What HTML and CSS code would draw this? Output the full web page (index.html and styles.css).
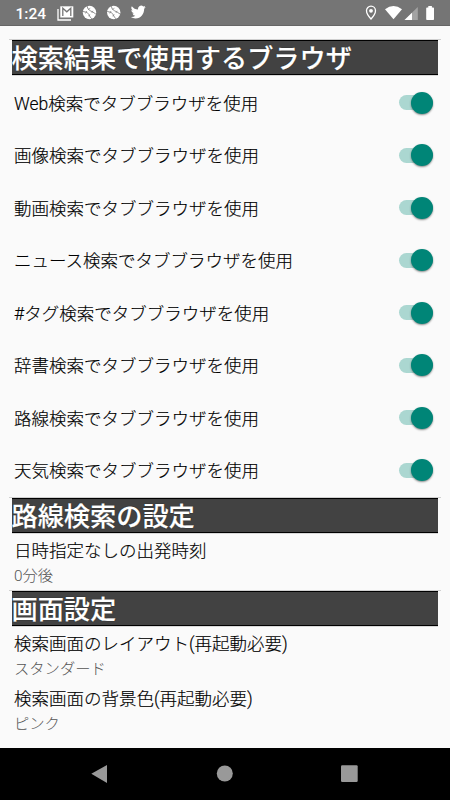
FILE: index.html
```html
<!DOCTYPE html>
<html lang="ja">
<head>
<meta charset="utf-8">
<title>設定</title>
<link rel="stylesheet" href="styles.css">
</head>
<body>
<header class="status">
  <span class="clock">1:24</span>
  <svg class="status-left" width="92" height="16" viewBox="0 0 92 16">
    <path d="M1 4v11h13" fill="none" stroke="#fff" stroke-width="1.3"/>
    <path d="M3.300 1.300h13v11.200h-13z" fill="#fff"/>
    <path d="M5.800 11V3.200l4 3.600 4-3.600V11" fill="none" stroke="#757575" stroke-width="1.3"/>
    <g id="ball">
      <circle cx="32.500" cy="7.500" r="6.700" fill="#fff"/>
      <path d="M26 6.500q5 .1 6 3.200t3.200 4.300M30 1q.4 3.500 3.200 4.700T38.800 9" fill="none" stroke="#757575" stroke-width=".8"/>
      <path d="M28.500 8.500l1.300-2.500M31.200 11l2-1.400M31 4.500l2.300-1.300M34.700 8l1.300-2.200" stroke="#757575" stroke-width=".6"/>
    </g>
    <use href="#ball" x="24.200"/>
    <path transform="translate(73.800 -.9) scale(.62 .66)" fill="#fff" d="M23.95 4.570a10 10 0 0 1-2.820.77 4.960 4.960 0 0 0 2.160-2.720c-.95.55-2 .95-3.130 1.180a4.920 4.920 0 0 0-8.380 4.480C7.690 8.100 4.070 6.130 1.640 3.160a4.920 4.920 0 0 0 1.520 6.570 4.900 4.900 0 0 1-2.230-.61v.06a4.920 4.920 0 0 0 3.950 4.830 5 5 0 0 1-2.210.08 4.940 4.940 0 0 0 4.600 3.420A9.870 9.870 0 0 1 0 19.540a14 14 0 0 0 7.550 2.210c9.050 0 14-7.500 14-13.980 0-.21 0-.42-.02-.63a9.900 9.900 0 0 0 2.420-2.570z"/>
  </svg>
  <svg class="status-right" width="72" height="16" viewBox="0 0 72 16">
    <path d="M6 1.200a4.500 4.500 0 0 0-4.500 4.500C1.500 9 6 14 6 14s4.500-5 4.500-8.300A4.500 4.500 0 0 0 6 1.200z" fill="none" stroke="#fff" stroke-width="1.3"/>
    <circle cx="6" cy="5.800" r="1.900" fill="#fff"/>
    <path d="M20 4.200Q28.500-2.200 37 4.200L28.500 14.200z" fill="#fff"/>
    <path d="M52.800 2v13H39.500z" fill="#a3a3a3"/>
    <path d="M47 7.700V15h-7.500z" fill="#fff"/>
    <path d="M63.300 1h3.600v1.400h1.300q.8 0 .8.800v11q0 .8-.8.800H62q-.8 0-.8-.8v-11q0-.8.8-.8h1.300z" fill="#fff"/>
  </svg>
</header>
<main class="settings">
  <h2 class="section">検索結果で使用するブラウザ</h2>
  <ul class="switches">
    <li class="row">Web検索でタブブラウザを使用<span class="switch"></span></li>
    <li class="row">画像検索でタブブラウザを使用<span class="switch"></span></li>
    <li class="row">動画検索でタブブラウザを使用<span class="switch"></span></li>
    <li class="row">ニュース検索でタブブラウザを使用<span class="switch"></span></li>
    <li class="row">#タグ検索でタブブラウザを使用<span class="switch"></span></li>
    <li class="row">辞書検索でタブブラウザを使用<span class="switch"></span></li>
    <li class="row">路線検索でタブブラウザを使用<span class="switch"></span></li>
    <li class="row">天気検索でタブブラウザを使用<span class="switch"></span></li>
  </ul>
  <h2 class="section">路線検索の設定</h2>
  <div class="item"><p class="title">日時指定なしの出発時刻</p><p class="value">0分後</p></div>
  <h2 class="section">画面設定</h2>
  <div class="item"><p class="title">検索画面のレイアウト(再起動必要)</p><p class="value">スタンダード</p></div>
  <div class="item"><p class="title">検索画面の背景色(再起動必要)</p><p class="value">ピンク</p></div>
</main>
<nav class="navbar">
  <svg width="450" height="52" viewBox="0 0 450 52">
    <path d="M91.300 25.700L107 17v18z" fill="#999"/>
    <circle cx="224.800" cy="25.500" r="8" fill="#999"/>
    <rect x="341" y="17.300" width="16.700" height="16.700" rx="1.200" fill="#999"/>
  </svg>
</nav>
</body>
</html>
```

FILE: styles.css
```css
* { box-sizing: border-box; margin: 0; padding: 0; }

body {
  width: 450px;
  height: 800px;
  display: flex;
  flex-direction: column;
  overflow: hidden;
  background: #fafafa;
  color: #000;
  font-family: Roboto, "Noto Sans CJK JP", sans-serif;
  font-weight: 300;
}

.status {
  height: 26px;
  flex: none;
  display: flex;
  align-items: center;
  padding: 0 15px 0 15.5px;
  background: #757575;
  border-bottom: 1px solid #666;
  color: #fff;
}

.clock { width: 41px; font-size: 15.5px; font-weight: 500; line-height: 26px; padding-top: 2px; }
.status-right { margin-left: auto; margin-right: -2px; }

.settings { flex: 1; padding: 13px 9px 0; }

.section {
  height: 37px;
  padding: 0 3px;
  border-top: 1px solid #d0d0d0;
  font-family: "Noto Sans CJK JP", sans-serif;
  font-size: 26.2px;
  font-weight: 500;
  line-height: 35px;
  color: #fff;
  -webkit-text-stroke: .2px #fff;
  text-shadow: 0 0 1px #000;
  text-indent: -.5px;
  background: linear-gradient(#000 1px, #424242 1px, #424242 34px, #000 34px, #000 35px, #d8d8d8 35px) 3px 0 / 426px 36px no-repeat;
}

.switches { list-style: none; height: 421px; }

.row {
  height: 52.5px;
  display: flex;
  align-items: center;
  justify-content: space-between;
  padding: 0 8.5px 0 5px;
  font-size: 17.5px;
  -webkit-text-stroke: .15px #000;
}

.switch {
  width: 34px;
  height: 15px;
  margin-top: 1px;
  display: flex;
  align-items: center;
  justify-content: flex-end;
  border-radius: 8px;
  background: #abd7d1;
}

.switch::after {
  content: "";
  width: 22px;
  height: 22px;
  flex: none;
  border-radius: 50%;
  background: #008577;
  box-shadow: 0 1px 2px rgba(0, 0, 0, .45);
}

.item { height: 55px; padding: 3px 5px 0; }
.section + .item { margin-top: 1px; }
.title { font-size: 17.5px; line-height: 26px; -webkit-text-stroke: .15px #000; }
.value { font-size: 15.3px; line-height: 25px; color: #555; }

.navbar { height: 52px; flex: none; background: #000; }
.navbar svg { display: block; }
```
